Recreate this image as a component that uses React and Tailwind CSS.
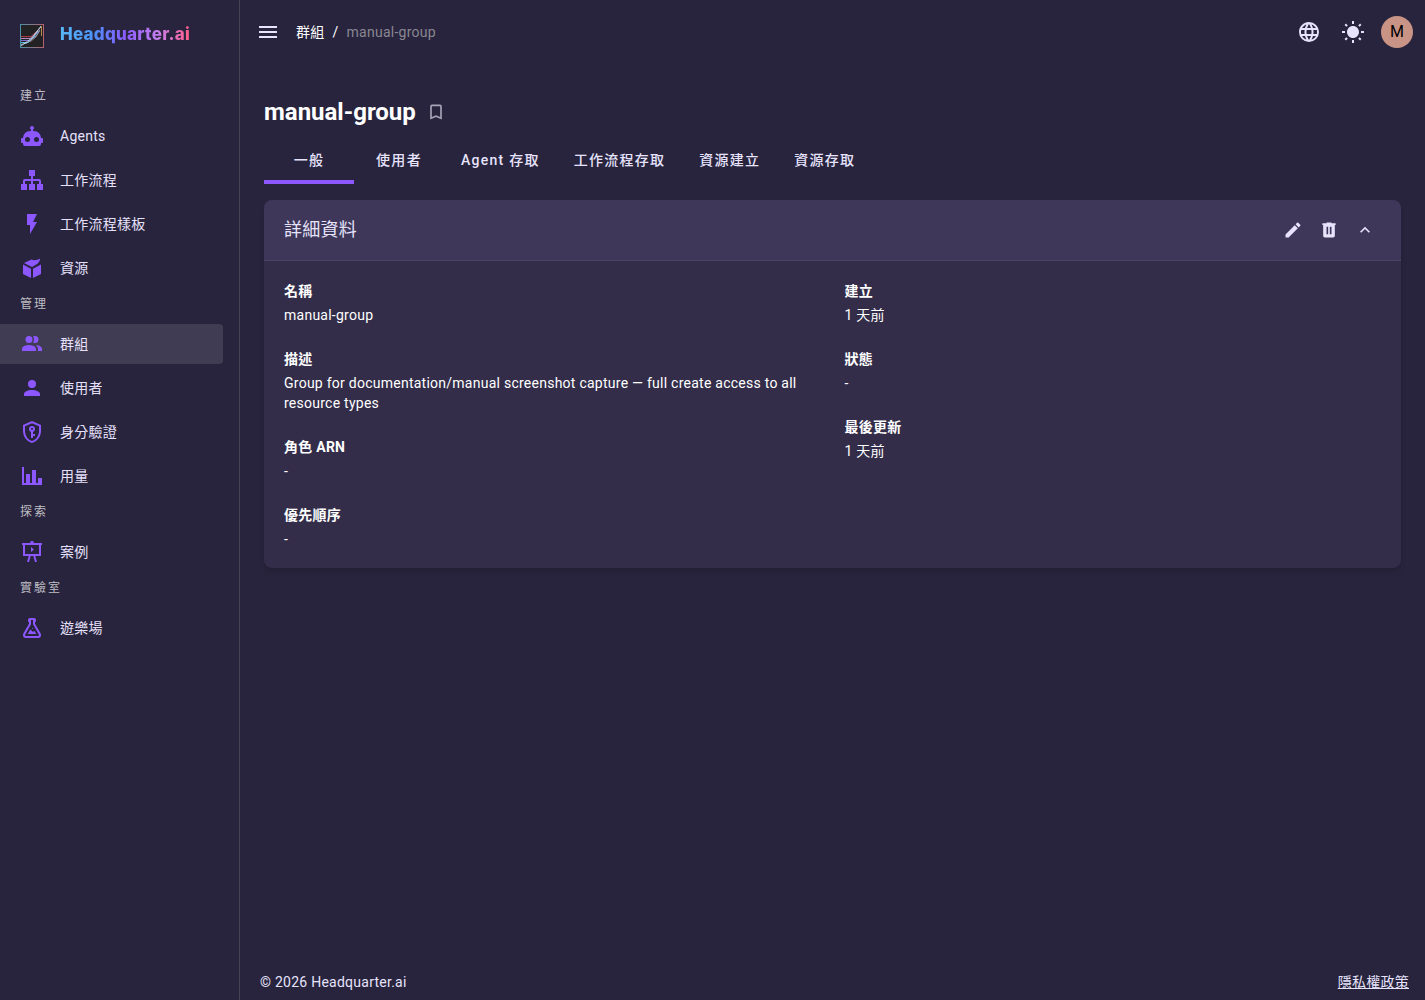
import React from "react";

const ICONS = {
  robot:
    "M12,2A2,2 0 0,1 14,4C14,4.74 13.6,5.39 13,5.73V7H14A7,7 0 0,1 21,14H22A1,1 0 0,1 23,15V18A1,1 0 0,1 22,19H21V20A2,2 0 0,1 19,22H5A2,2 0 0,1 3,20V19H2A1,1 0 0,1 1,18V15A1,1 0 0,1 2,14H3A7,7 0 0,1 10,7H11V5.73C10.4,5.39 10,4.74 10,4A2,2 0 0,1 12,2M7.5,13A2.5,2.5 0 0,0 5,15.5A2.5,2.5 0 0,0 7.5,18A2.5,2.5 0 0,0 10,15.5A2.5,2.5 0 0,0 7.5,13M16.5,13A2.5,2.5 0 0,0 14,15.5A2.5,2.5 0 0,0 16.5,18A2.5,2.5 0 0,0 19,15.5A2.5,2.5 0 0,0 16.5,13Z",
  sitemap:
    "M9,2V8H11V11H5C3.89,11 3,11.89 3,13V16H1V22H7V16H5V13H11V16H9V22H15V16H13V13H19V16H17V22H23V16H21V13C21,11.89 20.11,11 19,11H13V8H15V2H9Z",
  flash: "M7,2V13H10V22L17,10H13L17,2H7Z",
  box: "M3,8.6L11,12.8V22L3,18V8.600M21,8.600V18L13,22V12.800L21,8.600M4,7L11.500,3.600C14,4.600 17,4.600 20.200,2.600C20,4.600 19,6.200 17.500,7.800L12,11L4,7Z",
  group:
    "M16 17V19H2V17S2 13 9 13 16 17 16 17M12.5 7.5A3.5 3.5 0 1 0 9 11A3.5 3.5 0 0 0 12.5 7.5M15.94 13A5.32 5.32 0 0 1 18 17V19H22V17S22 13.37 15.94 13M15 4A3.39 3.39 0 0 0 13.07 4.59A5 5 0 0 1 13.07 10.41A3.39 3.39 0 0 0 15 11A3.5 3.5 0 0 0 15 4Z",
  account:
    "M12,4A4,4 0 0,1 16,8A4,4 0 0,1 12,12A4,4 0 0,1 8,8A4,4 0 0,1 12,4M12,14C16.42,14 20,15.79 20,18V20H4V18C4,15.79 7.58,14 12,14Z",
  shield:
    "M21,11C21,16.5 17.16,21.74 12,23C6.84,21.74 3,16.5 3,11V5L12,1L21,5V11M12,21C15.75,20 19,15.54 19,11.22V6.3L12,3.18L5,6.3V11.22C5,15.54 8.25,20 12,21M12,6A3,3 0 0,1 15,9C15,10.31 14.17,11.42 13,11.83V14H15V16H13V18H11V11.83C9.83,11.42 9,10.31 9,9A3,3 0 0,1 12,6M12,8A1,1 0 0,0 11,9A1,1 0 0,0 12,10A1,1 0 0,0 13,9A1,1 0 0,0 12,8Z",
  chart: "M22,21H2V3H4V19H6V10H10V19H12V6H16V19H18V14H22V21Z",
  presentation:
    "M2,3H10A2,2 0 0,1 12,1A2,2 0 0,1 14,3H22V5H21V16H15.25L17,22H15L13.25,16H10.75L9,22H7L8.75,16H3V5H2V3M5,5V14H19V5H5M11,7L14,9.5L11,12V7Z",
  flask:
    "M5,19A1,1 0 0,0 6,20H18A1,1 0 0,0 19,19C19,18.79 18.93,18.59 18.82,18.43L13,8.35V4H11V8.35L5.18,18.43C5.07,18.59 5,18.79 5,19M6,22A3,3 0 0,1 3,19C3,18.4 3.18,17.84 3.5,17.37L9,7.81V6A1,1 0 0,1 8,5V4A2,2 0 0,1 10,2H14A2,2 0 0,1 16,4V5A1,1 0 0,1 15,6V7.81L20.5,17.37C20.82,17.84 21,18.4 21,19A3,3 0 0,1 18,22H6M13,16L14.34,14.66L16.27,18H7.73L10.39,13.39L13,16M12.5,12A0.5,0.5 0 0,1 13,12.5A0.5,0.5 0 0,1 12.5,13A0.5,0.5 0 0,1 12,12.5A0.5,0.5 0 0,1 12.5,12Z",
  menu: "M3,6H21V8H3V6M3,11H21V13H3V11M3,16H21V18H3V16Z",
  web: "M16.36,14C16.44,13.34 16.5,12.68 16.5,12C16.5,11.32 16.44,10.66 16.36,10H19.74C19.9,10.64 20,11.31 20,12C20,12.69 19.9,13.36 19.74,14M14.59,19.56C15.19,18.45 15.65,17.25 15.97,16H18.92C17.96,17.65 16.43,18.93 14.59,19.56M14.34,14H9.66C9.56,13.34 9.5,12.68 9.5,12C9.5,11.32 9.56,10.65 9.66,10H14.34C14.43,10.65 14.5,11.32 14.5,12C14.5,12.68 14.43,13.34 14.34,14M12,19.96C11.17,18.76 10.5,17.43 10.09,16H13.91C13.5,17.43 12.83,18.76 12,19.96M8,8H5.08C6.03,6.34 7.57,5.06 9.4,4.44C8.8,5.55 8.35,6.75 8,8M5.08,16H8C8.35,17.25 8.8,18.45 9.4,19.56C7.57,18.93 6.03,17.65 5.08,16M4.26,14C4.1,13.36 4,12.69 4,12C4,11.31 4.1,10.64 4.26,10H7.64C7.56,10.66 7.5,11.32 7.5,12C7.5,12.68 7.56,13.34 7.64,14M12,4.03C12.83,5.23 13.5,6.57 13.91,8H10.09C10.5,6.57 11.17,5.23 12,4.03M18.92,8H15.97C15.65,6.75 15.19,5.55 14.59,4.44C16.43,5.07 17.96,6.34 18.92,8M12,2C6.47,2 2,6.5 2,12A10,10 0 0,0 12,22A10,10 0 0,0 22,12A10,10 0 0,0 12,2Z",
  sun: "M3.55 19.09L4.96 20.5L6.76 18.71L5.34 17.29M12 6C8.69 6 6 8.69 6 12S8.69 18 12 18 18 15.31 18 12C18 8.68 15.31 6 12 6M20 13H23V11H20M17.24 18.71L19.04 20.5L20.45 19.09L18.66 17.29M20.45 5L19.04 3.6L17.24 5.39L18.66 6.81M13 1H11V4H13M6.76 5.39L4.96 3.6L3.55 5L5.34 6.81L6.76 5.39M1 13H4V11H1M13 20H11V23H13",
  bookmark:
    "M17,18L12,15.82L7,18V5H17M17,3H7A2,2 0 0,0 5,5V21L12,18L19,21V5C19,3.89 18.1,3 17,3Z",
  pencil:
    "M20.71,7.04C21.1,6.65 21.1,6 20.71,5.63L18.37,3.29C18,2.9 17.35,2.9 16.96,3.29L15.12,5.12L18.87,8.87M3,17.25V21H6.75L17.81,9.93L14.06,6.18L3,17.25Z",
  trash:
    "M9,3V4H4V6H5V19A2,2 0 0,0 7,21H17A2,2 0 0,0 19,19V6H20V4H15V3H9M9,8H11V17H9V8M13,8H15V17H13V8Z",
  chevronUp: "M7.41,15.41L12,10.83L16.59,15.41L18,14L12,8L6,14L7.41,15.41Z",
};

const NAV = [
  {
    title: "建立",
    items: [
      { icon: "robot", label: "Agents" },
      { icon: "sitemap", label: "工作流程" },
      { icon: "flash", label: "工作流程樣板" },
      { icon: "box", label: "資源" },
    ],
  },
  {
    title: "管理",
    items: [
      { icon: "group", label: "群組", active: true },
      { icon: "account", label: "使用者" },
      { icon: "shield", label: "身分驗證" },
      { icon: "chart", label: "用量" },
    ],
  },
  { title: "探索", items: [{ icon: "presentation", label: "案例" }] },
  { title: "實驗室", items: [{ icon: "flask", label: "遊樂場" }] },
];

const TABS = ["一般", "使用者", "Agent 存取", "工作流程存取", "資源建立", "資源存取"];

const LEFT_FIELDS = [
  { label: "名稱", value: "manual-group" },
  {
    label: "描述",
    value:
      "Group for documentation/manual screenshot capture — full create access to all resource types",
  },
  { label: "角色 ARN", value: "-" },
  { label: "優先順序", value: "-" },
];

const RIGHT_FIELDS = [
  { label: "建立", value: "1 天前" },
  { label: "狀態", value: "-" },
  { label: "最後更新", value: "1 天前" },
];

const Icon = ({ name, className = "size-6" }) => (
  <svg viewBox="0 0 24 24" fill="currentColor" aria-hidden="true" className={`shrink-0 ${className}`}>
    <path d={ICONS[name]} />
  </svg>
);

const LogoMark = () => (
  <svg viewBox="0 0 24 24" fill="none" aria-hidden="true" className="size-6 shrink-0">
    <defs>
      <linearGradient id="frame" x1="0" y1="0" x2="1" y2="0">
        <stop offset="0" stopColor="#4d8fa5" />
        <stop offset="1" stopColor="#b5626f" />
      </linearGradient>
    </defs>
    <rect x="0.5" y="0.5" width="23" height="23" fill="#222124" stroke="url(#frame)" />
    <path d="M1 12.5H11L16 8" stroke="#a8393f" />
    <path d="M1 14.5H10L18 7" stroke="#b78ac9" />
    <path d="M1 16.5H9L19 7" stroke="#7d6bd0" />
    <path d="M1 18.5H8L16 12L20 6" stroke="#5fb4e0" />
    <path d="M1 20.5L7 19L14 13L18 6L21 2" stroke="#8fc4dc" />
    <path d="M1 22L5 19L12 14L17 7L21 3" stroke="#d8d8dc" strokeWidth="0.8" />
    <path d="M10 18L16 13L19 8V5" stroke="#c58a94" strokeWidth="0.7" />
    <path d="M21.5 2V12" stroke="#b98a4a" />
  </svg>
);

const Sidebar = () => (
  <aside className="w-60 shrink-0 border-r border-[#474354]">
    <a href="#" className="flex items-center gap-4 px-5 pt-6">
      <LogoMark />
      <span className="bg-[linear-gradient(90deg,#58b8f5,#4b93fa_25%,#8b5cff_50%,#c47ff0_75%,#ff5f8a)] bg-clip-text pb-1 text-[17px] leading-5 font-extrabold text-transparent font-['Inter',sans-serif]">
        Headquarter.ai
      </span>
    </a>
    <nav className="pt-8 pr-4">
      {NAV.map((group) => (
        <div key={group.title}>
          <h2 className="flex h-8 items-center pl-5 text-xs tracking-[2px] text-[#bfbdc4]">
            {group.title}
          </h2>
          <ul className="flex flex-col gap-1 pt-1">
            {group.items.map((item) => (
              <li key={item.label}>
                <a
                  href="#"
                  className={`flex h-10 items-center gap-4 rounded-r pl-5 text-[#e6e0fb] ${
                    item.active ? "bg-[#403c54]" : ""
                  }`}
                >
                  <Icon name={item.icon} className="size-6 text-[#8c57ff]" />
                  {item.label}
                </a>
              </li>
            ))}
          </ul>
        </div>
      ))}
    </nav>
  </aside>
);

const TopBar = () => (
  <header className="flex h-16 items-center pr-3 pl-4 text-[#e7e3fc]">
    <button type="button" aria-label="Menu">
      <Icon name="menu" />
    </button>
    <nav className="flex flex-1 gap-2 pl-4">
      <a href="#" className="text-white">
        群組
      </a>
      <span className="text-white">/</span>
      <span className="text-[#8a8792]">manual-group</span>
    </nav>
    <div className="flex items-center">
      <button type="button" aria-label="Language" className="mr-5">
        <Icon name="web" />
      </button>
      <button type="button" aria-label="Theme" className="mr-4">
        <Icon name="sun" />
      </button>
      <button
        type="button"
        className="size-8 rounded-full bg-[#c99486] text-base text-black"
      >
        M
      </button>
    </div>
  </header>
);

const Field = ({ label, value }) => (
  <div>
    <dt className="mb-1 font-bold">{label}</dt>
    <dd>{value}</dd>
  </div>
);

const DetailsCard = () => (
  <section className="mt-4 overflow-hidden rounded-lg bg-[#332d4a] shadow-md">
    <div className="flex h-[61px] items-center border-b border-[#4b4564] bg-[#3e3759] pr-[18px] pl-5 text-[#e7e3fc]">
      <h2 className="flex-1 text-lg">詳細資料</h2>
      <div className="flex">
        <button type="button" aria-label="Edit" className="p-2">
          <Icon name="pencil" className="size-5" />
        </button>
        <button type="button" aria-label="Delete" className="p-2">
          <Icon name="trash" className="size-5" />
        </button>
        <button type="button" aria-label="Collapse" className="p-2">
          <Icon name="chevronUp" className="size-5" />
        </button>
      </div>
    </div>
    <div className="grid grid-cols-2 gap-6 px-5 pt-5 pb-[19px] text-white">
      <dl className="flex flex-col gap-6">
        {LEFT_FIELDS.map((f) => (
          <Field key={f.label} {...f} />
        ))}
      </dl>
      <dl className="flex flex-col gap-6">
        {RIGHT_FIELDS.map((f) => (
          <Field key={f.label} {...f} />
        ))}
      </dl>
    </div>
  </section>
);

export default function App() {
  return (
    <div className="flex min-h-screen bg-[#28243d] text-sm tracking-[0.018em] font-['Roboto','Noto_Sans_CJK_TC',sans-serif]">
      <Sidebar />
      <div className="flex min-w-0 flex-1 flex-col">
        <TopBar />
        <main className="flex-1 px-6 pt-8">
          <div className="flex h-8 items-center gap-[10px]">
            <h1 className="text-2xl font-bold tracking-normal text-white">manual-group</h1>
            <button type="button" aria-label="Bookmark" className="text-[#a7a3b8]">
              <Icon name="bookmark" className="size-5" />
            </button>
          </div>
          <div role="tablist" className="mt-2 flex h-12 items-stretch">
            {TABS.map((tab, i) => (
              <button
                key={tab}
                type="button"
                role="tab"
                aria-selected={i === 0}
                className={`min-w-[90px] border-y-4 border-t-transparent px-[17px] font-medium tracking-[0.09em] text-[#e7e3fc] ${
                  i === 0 ? "border-b-[#8c57ff]" : "border-b-transparent"
                }`}
              >
                {tab}
              </button>
            ))}
          </div>
          <DetailsCard />
        </main>
        <footer className="flex justify-between px-4 pb-2 text-[#e7e3fc]">
          <span className="pl-1">© 2026 Headquarter.ai</span>
          <a href="#" className="underline">
            隱私權政策
          </a>
        </footer>
      </div>
    </div>
  );
}
